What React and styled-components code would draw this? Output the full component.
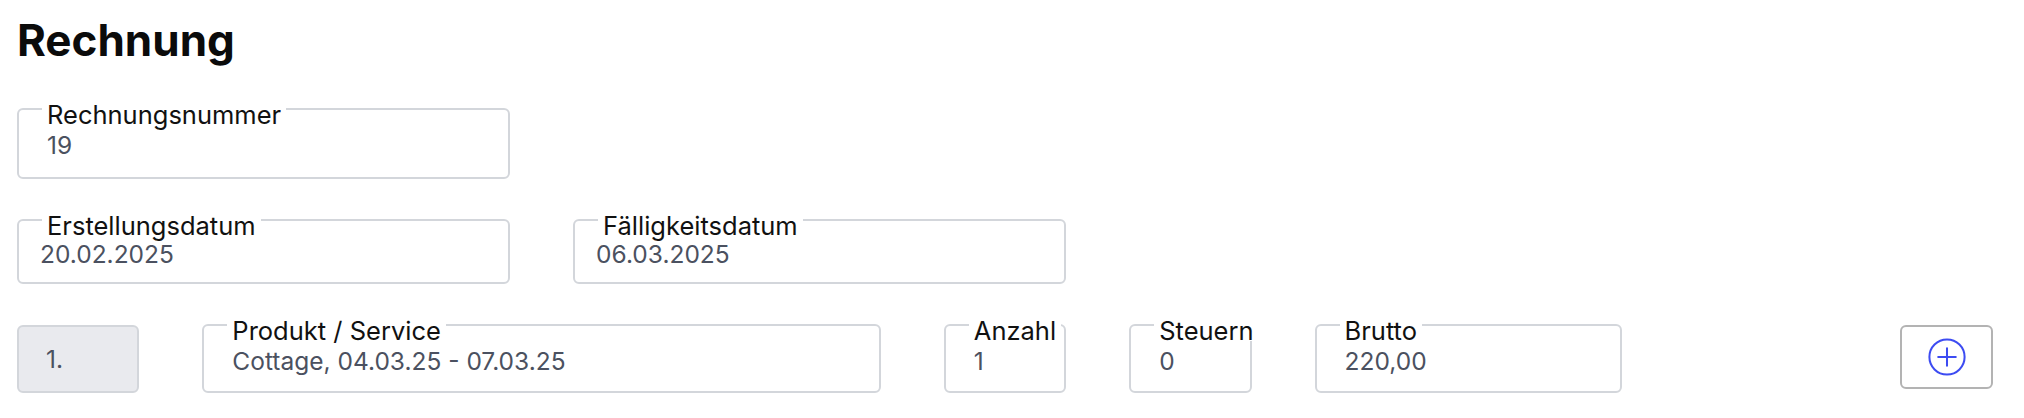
import styled, { createGlobalStyle } from "styled-components";

const GlobalStyle = createGlobalStyle`
  body {
    margin: 0;
    background: #ffffff;
    font-family: Inter, "Noto Sans", "Liberation Sans", sans-serif;
  }
`;

const Page = styled.div`
  padding: 14px 31px 0 17px;
`;

const Title = styled.h1`
  margin: 0 0 26px;
  font-size: 44px;
  font-weight: 700;
  line-height: 53px;
  color: #0b0b0b;
`;

const Grid = styled.form`
  display: grid;
  grid-template-columns: repeat(11, 1fr);
  column-gap: 63px;
  row-gap: 25px;
  align-items: end;
`;

const Field = styled.fieldset`
  grid-column: span ${(p) => p.$span || 1};
  margin: 0;
  min-width: 0;
  padding: 0 23px ${(p) => p.$bottom}px;
  border: 2px solid #d3d6db;
  border-radius: 6px;
`;

const Legend = styled.legend`
  padding: 12px 5px 0;
  font-size: 25.5px;
  line-height: 20px;
  color: #111111;
  white-space: nowrap;
`;

const Value = styled.input`
  display: block;
  width: 100%;
  box-sizing: border-box;
  margin: ${(p) => p.$top}px 0 0 ${(p) => p.$shift || 0}px;
  padding: 0 0 0 5px;
  border: none;
  outline: none;
  background: transparent;
  font-family: inherit;
  font-size: 24.5px;
  line-height: 29px;
  height: 29px;
  color: #4b5160;
`;

const Position = styled.div`
  grid-column: span 1;
  height: 68px;
  box-sizing: border-box;
  display: flex;
  align-items: center;
  padding-left: 27px;
  border: 2px solid #d3d6db;
  border-radius: 6px;
  background: #e9eaee;
  font-size: 24.5px;
  color: #4b5160;
`;

const AddButton = styled.button`
  grid-column: 11;
  justify-self: end;
  width: 93px;
  height: 64px;
  margin-bottom: 4px;
  display: flex;
  align-items: center;
  justify-content: center;
  border: 2px solid #b3b3b3;
  border-radius: 6px;
  background: #ffffff;
  cursor: pointer;
`;

const Spacer = styled.div`
  grid-column: ${(p) => p.$from} / span ${(p) => p.$span};
`;

const PlusIcon = () => (
  <svg width="44" height="44" viewBox="0 0 24 24" fill="none" stroke="#3d4cf2" strokeWidth="1.1" strokeLinecap="round">
    <circle cx="12" cy="12" r="9.6" />
    <path d="M12 7.2v9.6M7.2 12h9.6" />
  </svg>
);

const TextField = ({ label, value, span, top, bottom, shift }) => (
  <Field $span={span} $bottom={bottom}>
    <Legend>{label}</Legend>
    <Value $top={top} $shift={shift} defaultValue={value} readOnly />
  </Field>
);

const App = () => {
  return (
    <>
      <GlobalStyle />
      <Page>
        <Title>Rechnung</Title>
        <Grid onSubmit={(e) => e.preventDefault()}>
          <TextField label="Rechnungsnummer" value="19" span={3} top={6} bottom={17} />
          <Spacer $from={4} $span={8} />

          <TextField label="Erstellungsdatum" value="20.02.2025" span={3} top={4} bottom={13} shift={-7} />
          <TextField label="Fälligkeitsdatum" value="06.03.2025" span={3} top={4} bottom={13} shift={-7} />
          <Spacer $from={7} $span={5} />

          <Position>1.</Position>
          <TextField label="Produkt / Service" value="Cottage, 04.03.25 - 07.03.25" span={4} top={6} bottom={15} />
          <TextField label="Anzahl" value="1" span={1} top={6} bottom={15} />
          <TextField label="Steuern" value="0" span={1} top={6} bottom={15} />
          <TextField label="Brutto" value="220,00" span={2} top={6} bottom={15} />
          <AddButton type="button" aria-label="Position hinzufügen">
            <PlusIcon />
          </AddButton>
        </Grid>
      </Page>
    </>
  );
};

export default App;
